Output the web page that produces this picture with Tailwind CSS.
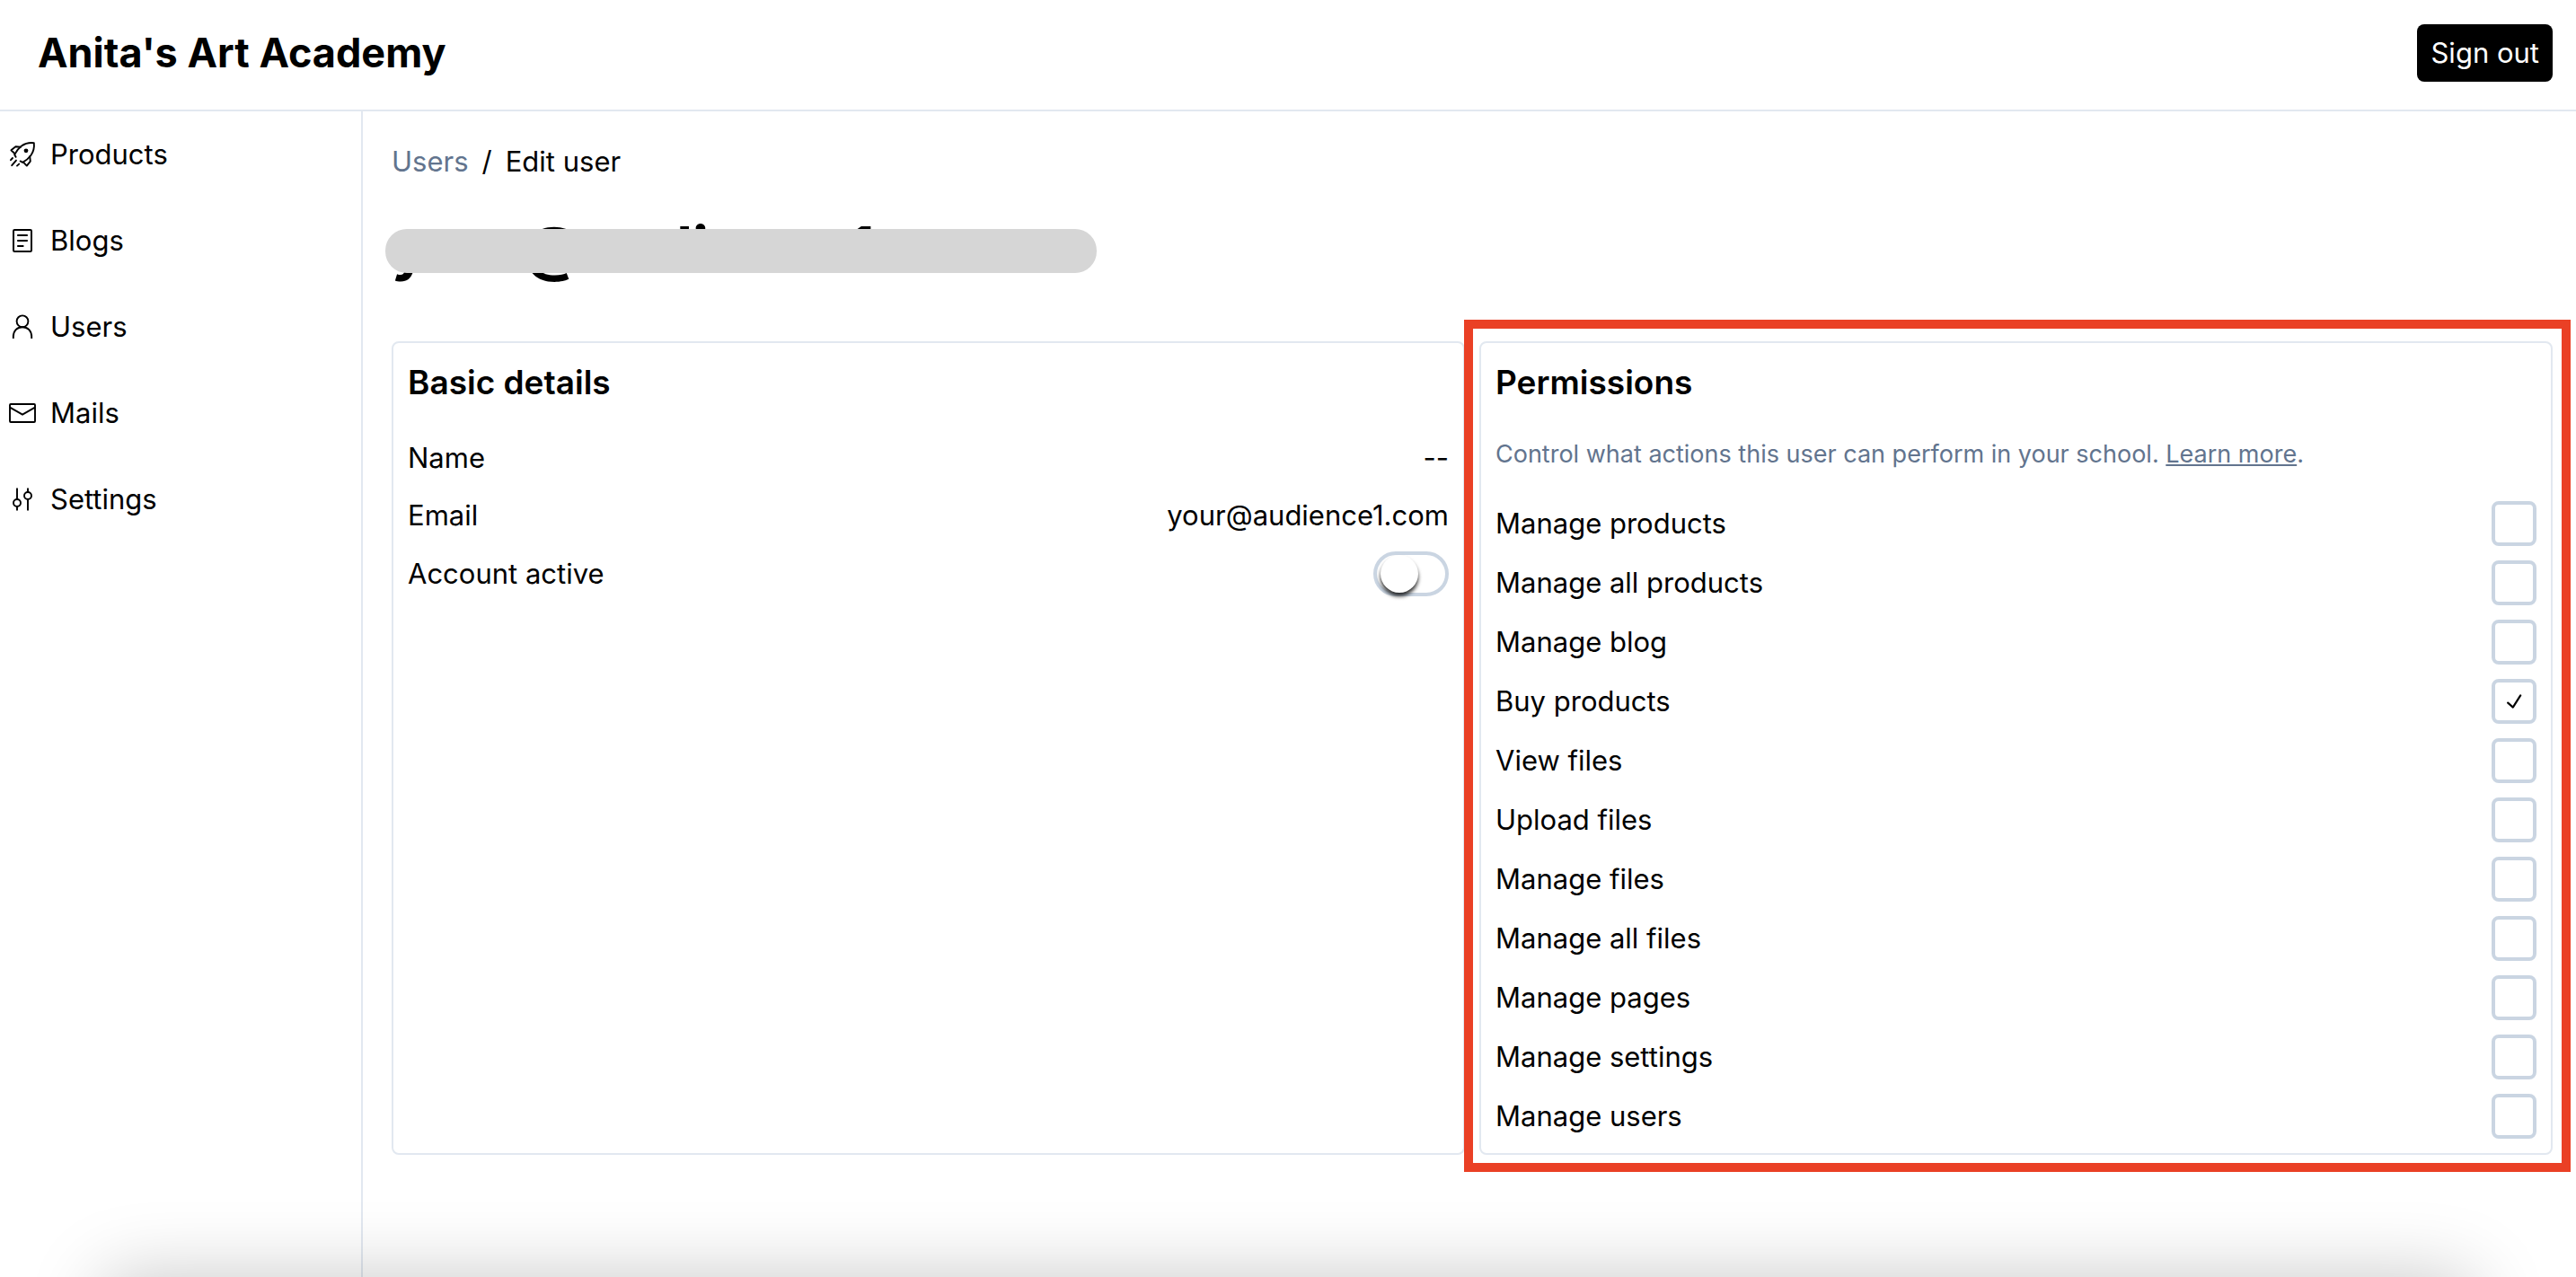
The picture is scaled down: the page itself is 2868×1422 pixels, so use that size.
<!DOCTYPE html>
<html lang="en">
<head>
<meta charset="utf-8">
<meta name="viewport" content="width=device-width, initial-scale=1">
<title>Edit user</title>
<script src="https://cdn.jsdelivr.net/npm/@tailwindcss/browser@4"></script>
</head>
<body class="relative flex min-h-screen flex-col bg-white font-[Inter,Roboto,sans-serif] text-[31px] leading-[48px] text-black">

<header class="flex items-center justify-between border-b-2 border-slate-200 pt-[27px] pr-[26px] pb-[31px] pl-[42px]">
  <a href="#" class="text-[45px] font-bold">Anita's Art Academy</a>
  <button type="button" class="h-16 rounded-lg bg-black px-[15px] text-white">Sign out</button>
</header>

<div class="flex flex-1">
  <nav class="w-[404px] shrink-0 border-r-2 border-slate-200" aria-label="Main">
    <ul>
      <li>
        <a href="#" class="flex h-24 items-center gap-4 pl-[10px]">
          <svg class="size-[30px]" viewBox="0 0 15 15" fill="none" stroke="currentColor" stroke-width="0.95" stroke-linecap="round" stroke-linejoin="round" aria-hidden="true">
            <path d="M3.8 8.9 L3.1 7.6 C4 5.7 5.3 4.1 7 2.8 C8.9 1.4 11.2 .8 13.9 1.1 C14.2 3.8 13.6 6.1 12.2 8 C11 9.6 9.5 10.9 7.6 11.9 L6.3 11.2"/>
            <path d="M6.4 3.4 L3.7 3.1 L1.2 5.1 L3.2 7 M11.6 8.6 L11.9 11.3 L9.9 13.8 L8 11.8"/>
            <circle cx="9.5" cy="5.4" r="1.2" fill="currentColor" stroke="none"/>
            <path d="M2 9.5 L1 10.6 M4 10.8 L1.6 13.6 M5.6 12.8 L4.5 13.8"/>
          </svg>
          <span>Products</span>
        </a>
      </li>
      <li>
        <a href="#" class="flex h-24 items-center gap-4 pl-[10px]">
          <svg class="size-[30px]" viewBox="0 0 15 15" fill="none" stroke="currentColor" aria-hidden="true">
            <rect x="2.5" y="1.5" width="10" height="12" rx=".6"/>
            <path d="M4.6 4.5 H10.4 M4.6 7.5 H10.4 M4.6 10.5 H8.2"/>
          </svg>
          <span>Blogs</span>
        </a>
      </li>
      <li>
        <a href="#" class="flex h-24 items-center gap-4 pl-[10px]">
          <svg class="size-[30px]" viewBox="0 0 15 15" fill="none" stroke="currentColor" stroke-width="0.95" aria-hidden="true">
            <circle cx="7.5" cy="4.4" r="3.2"/>
            <path d="M2.4 14 V13 C2.4 9.7 4.5 7.6 7.5 7.6 S12.6 9.7 12.6 13 V14"/>
          </svg>
          <span>Users</span>
        </a>
      </li>
      <li>
        <a href="#" class="flex h-24 items-center gap-4 pl-[10px]">
          <svg class="size-[30px]" viewBox="0 0 15 15" fill="none" stroke="currentColor" stroke-width="0.95" aria-hidden="true">
            <rect x=".5" y="2.5" width="14" height="10" rx=".5"/>
            <path d="M.5 4.3 L7.5 8.3 L14.5 4.3"/>
          </svg>
          <span>Mails</span>
        </a>
      </li>
      <li>
        <a href="#" class="flex h-24 items-center gap-4 pl-[10px]">
          <svg class="size-[30px]" viewBox="0 0 15 15" fill="none" stroke="currentColor" stroke-width="0.95" aria-hidden="true">
            <circle cx="4.5" cy="9.5" r="2"/>
            <circle cx="10.5" cy="5.5" r="2"/>
            <path d="M4.5 1.3 V7.5 M4.5 11.5 V13.8 M10.5 1.3 V3.5 M10.5 7.5 V13.8"/>
          </svg>
          <span>Settings</span>
        </a>
      </li>
    </ul>
  </nav>

  <main class="min-w-0 flex-1 pt-8 pr-[26px] pb-8 pl-8">
    <nav class="flex gap-[15px]" aria-label="Breadcrumb">
      <a href="#" class="text-slate-500">Users</a>
      <span>/</span>
      <span>Edit user</span>
    </nav>

    <div class="relative mt-8 flex">
      <h1 class="text-[66px] leading-[80px] font-bold">your@audience1.com</h1>
      <div class="absolute top-[19px] -left-[7px] h-[49px] w-[792px] rounded-3xl bg-[#d6d6d6]"></div>
    </div>

    <div class="mt-16 grid grid-cols-2 gap-4">
      <section class="flex flex-col gap-8 rounded-lg border-2 border-slate-200 p-4">
        <h2 class="text-[37px] leading-[56px] font-semibold">Basic details</h2>
        <div class="flex flex-col gap-4">
          <div class="flex justify-between"><span>Name</span><span>--</span></div>
          <div class="flex justify-between"><span>Email</span><span>your@audience1.com</span></div>
          <label class="flex items-center justify-between">
            <span>Account active</span>
            <input type="checkbox" role="switch" class="flex h-[50px] w-[84px] appearance-none items-center rounded-full border-4 border-slate-300 pl-1 before:size-[42px] before:rounded-full before:bg-white before:shadow-[0_4px_4px_#000c] checked:justify-end checked:bg-black">
          </label>
        </div>
      </section>

      <section class="relative flex flex-col gap-8 rounded-lg border-2 border-slate-200 p-4">
        <div class="pointer-events-none absolute -top-[26px] -right-[22px] -bottom-[21px] -left-[19px] border-10 border-[#ea4025]"></div>
        <h2 class="text-[37px] leading-[56px] font-semibold">Permissions</h2>
        <p class="text-[27px] leading-10 text-slate-500">Control what actions this user can perform in your school. <a href="#" class="underline">Learn more</a>.</p>
        <div id="permissions" class="flex flex-col gap-4"></div>
      </section>
    </div>
  </main>
</div>

<!-- Soft shade along the bottom edge of the window -->
<div class="pointer-events-none absolute inset-x-0 bottom-0 h-32 overflow-hidden">
  <div class="absolute inset-x-[115px] top-full h-32 rounded-2xl shadow-[0_0_84px_rgba(0,0,0,0.22)]"></div>
</div>

<template id="permission-row">
  <label class="flex h-[50px] items-center justify-between">
    <span></span>
    <span class="grid place-items-center">
      <input type="checkbox" class="peer col-start-1 row-start-1 size-[50px] appearance-none rounded-lg border-4 border-slate-300">
      <svg class="pointer-events-none invisible col-start-1 row-start-1 size-[30px] peer-checked:visible" viewBox="0 0 15 15" fill="none" stroke="currentColor" stroke-width="1.1" stroke-linecap="round" stroke-linejoin="round" aria-hidden="true">
        <path d="M4.1 8.3 L6.9 10.8 L11.1 4.2"/>
      </svg>
    </span>
  </label>
</template>

<script>
  const permissions = [
    ['Manage products', false],
    ['Manage all products', false],
    ['Manage blog', false],
    ['Buy products', true],
    ['View files', false],
    ['Upload files', false],
    ['Manage files', false],
    ['Manage all files', false],
    ['Manage pages', false],
    ['Manage settings', false],
    ['Manage users', false],
  ];
  const list = document.getElementById('permissions');
  const template = document.getElementById('permission-row');
  for (const [name, granted] of permissions) {
    const row = template.content.cloneNode(true);
    row.querySelector('span').textContent = name;
    row.querySelector('input').checked = granted;
    list.append(row);
  }
</script>
</body>
</html>
